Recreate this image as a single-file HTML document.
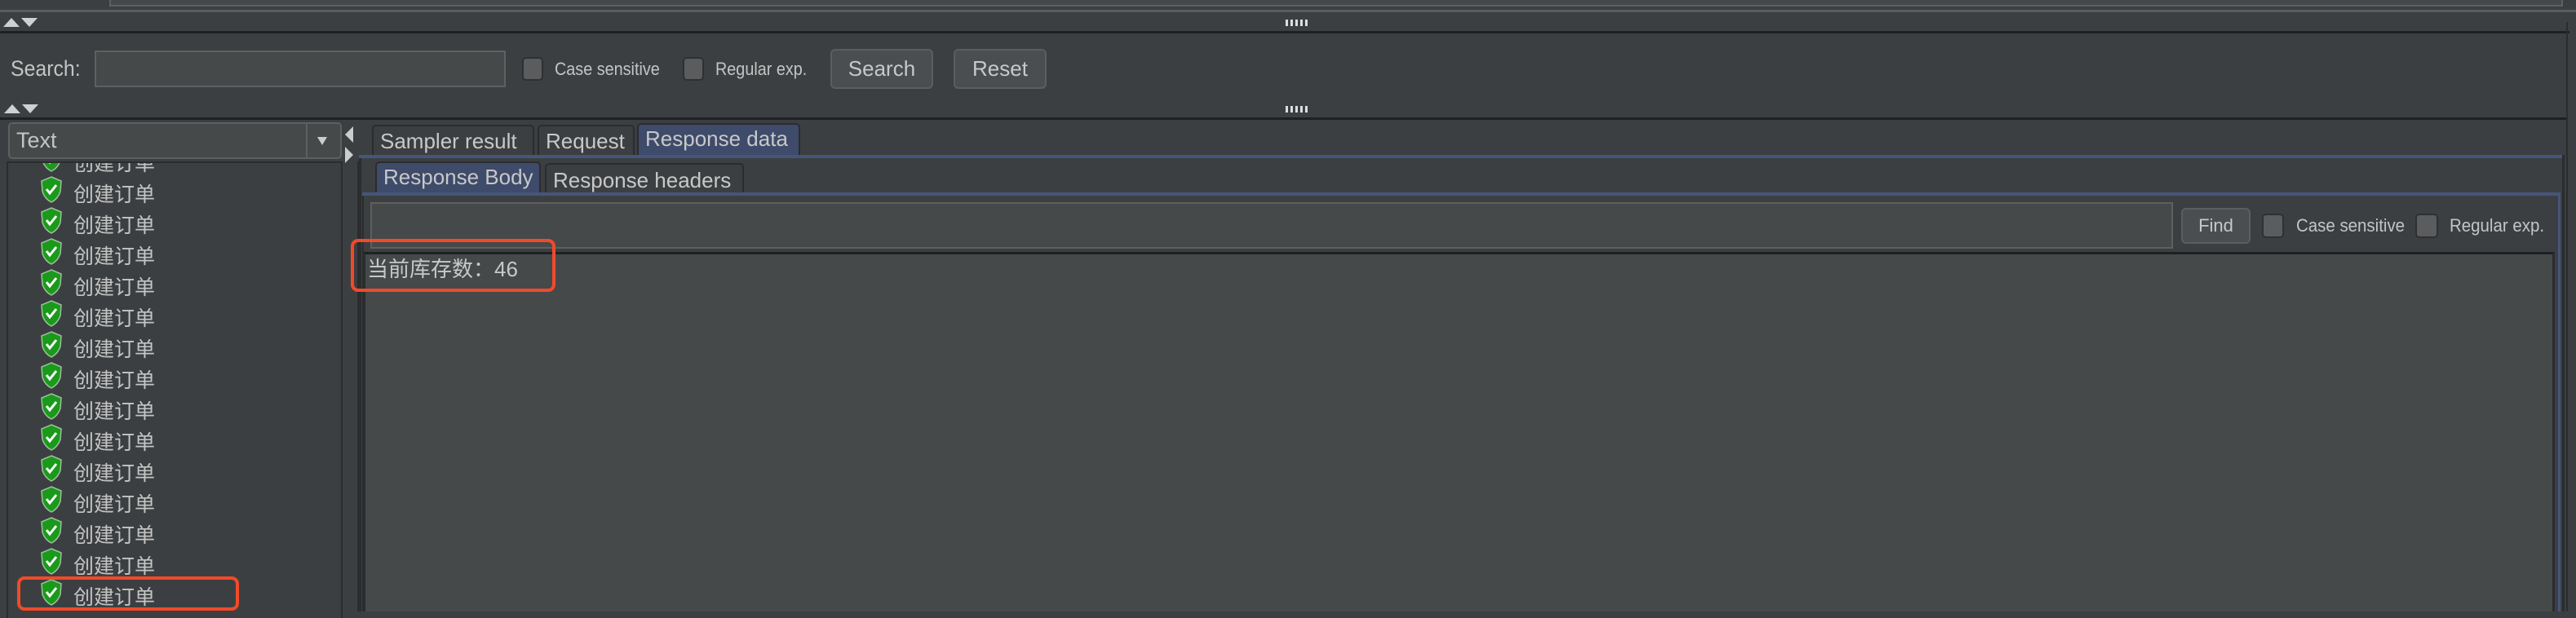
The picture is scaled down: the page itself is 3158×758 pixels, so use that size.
<!DOCTYPE html>
<html><head><meta charset="utf-8"><style>
*{margin:0;padding:0;box-sizing:border-box}
body{width:3158px;height:750px;background:#3c3f41;overflow:hidden;position:relative;font-family:"Liberation Sans","Noto Sans CJK SC",sans-serif;color:#c4c4c4}
.a{position:absolute}
.t{position:absolute;white-space:nowrap;line-height:1;transform-origin:0 0}
.cb{position:absolute;width:26px;height:29px;background:#5a5c5e;border:2px solid #2e3032;border-radius:5px}
.btn{position:absolute;background:#4a4e51;border:2px solid #5a5e61;border-radius:6px;text-align:center;color:#c8c8c8}
.tab{position:absolute;background:#3c3f41;border:2px solid #2a2c2e;border-bottom:none;border-radius:5px 5px 0 0;color:#c8c8c8;font-size:26px;padding-left:8px;white-space:nowrap}
.row{position:absolute;left:50px;height:38px}
.row span{position:absolute;left:40px;top:3px;font-size:25px;color:#c4c4c4;white-space:nowrap}
</style></head><body>
<svg width="0" height="0" style="position:absolute"><defs><g id="sh"><path d="M13 1 L25 6 L24 19 Q21 28 13 32 Q5 28 2 19 L1 6 Z" fill="#1a9a1a" stroke="#9fbf9f" stroke-width="1.5"/><path d="M7 16 L11 21 L19 11" fill="none" stroke="#fff" stroke-width="3"/></g></defs></svg>
<div class="a" style="left:134px;top:0;width:3008px;height:8px;background:#45494a;border:2px solid #5e6060;border-top:none"></div>
<div class="a" style="left:0;top:12px;width:3158px;height:3px;background:#5a5d60"></div>
<div class="a" style="left:4px;top:22px;width:0;height:0;border-left:10px solid transparent;border-right:10px solid transparent;border-bottom:11px solid #d0d0d0"></div>
<div class="a" style="left:26px;top:22px;width:0;height:0;border-left:10px solid transparent;border-right:10px solid transparent;border-top:11px solid #d0d0d0"></div>
<div class="a" style="left:1576px;top:24px;width:30px;height:8px;background:repeating-linear-gradient(90deg,#ddd 0 3px,#3c3f41 3px 6px)"></div>
<div class="a" style="left:0;top:38px;width:3150px;height:3px;background:#1e2022"></div>
<div class="a" style="left:3146px;top:27px;width:2px;height:723px;background:#2a2c2e"></div>

<div class="t" style="left:13px;top:71px;font-size:27px;transform:scaleX(.92)">Search:</div>
<div class="a" style="left:116px;top:62px;width:504px;height:45px;background:#45494a;border:2px solid #5e6060"></div>
<div class="cb" style="left:640px;top:70px"></div>
<div class="t" style="left:680px;top:74px;font-size:22px;transform:scaleX(.9)">Case sensitive</div>
<div class="cb" style="left:837px;top:70px"></div>
<div class="t" style="left:877px;top:74px;font-size:22px;transform:scaleX(.9)">Regular exp.</div>
<div class="btn" style="left:1018px;top:60px;width:126px;height:49px;font-size:26px;line-height:45px">Search</div>
<div class="btn" style="left:1169px;top:60px;width:114px;height:49px;font-size:26px;line-height:45px">Reset</div>

<div class="a" style="left:5px;top:128px;width:0;height:0;border-left:10px solid transparent;border-right:10px solid transparent;border-bottom:11px solid #d0d0d0"></div>
<div class="a" style="left:27px;top:128px;width:0;height:0;border-left:10px solid transparent;border-right:10px solid transparent;border-top:11px solid #d0d0d0"></div>
<div class="a" style="left:1576px;top:130px;width:30px;height:8px;background:repeating-linear-gradient(90deg,#ddd 0 3px,#3c3f41 3px 6px)"></div>
<div class="a" style="left:0;top:144px;width:3146px;height:3px;background:#1e2022"></div>

<div class="a" style="left:10px;top:150px;width:409px;height:45px;background:#45494a;border:2px solid #5e6060;border-radius:5px"></div>
<div class="t" style="left:20px;top:159px;font-size:27px">Text</div>
<div class="a" style="left:375px;top:152px;width:2px;height:41px;background:#5e6060"></div>
<div class="a" style="left:389px;top:168px;width:0;height:0;border-left:6px solid transparent;border-right:6px solid transparent;border-top:10px solid #ccc"></div>
<div class="a" style="left:423px;top:155px;width:0;height:0;border-top:10px solid transparent;border-bottom:10px solid transparent;border-right:10px solid #ccc"></div>
<div class="a" style="left:423px;top:180px;width:0;height:0;border-top:10px solid transparent;border-bottom:10px solid transparent;border-left:10px solid #ccc"></div>
<div class="a" style="left:8px;top:198px;width:412px;height:560px;border:2px solid #2a2c2e;border-bottom:none"></div>
<div class="a" style="left:438px;top:198px;width:3px;height:552px;background:#2a2c2e"></div>

<div class="a" style="left:0;top:200px;width:418px;height:550px;overflow:hidden">
<div class="row" style="top:-22px"><svg width="26" height="34"><use href="#sh"/></svg><span>创建订单</span></div>
<div class="row" style="top:16px"><svg width="26" height="34"><use href="#sh"/></svg><span>创建订单</span></div>
<div class="row" style="top:54px"><svg width="26" height="34"><use href="#sh"/></svg><span>创建订单</span></div>
<div class="row" style="top:92px"><svg width="26" height="34"><use href="#sh"/></svg><span>创建订单</span></div>
<div class="row" style="top:130px"><svg width="26" height="34"><use href="#sh"/></svg><span>创建订单</span></div>
<div class="row" style="top:168px"><svg width="26" height="34"><use href="#sh"/></svg><span>创建订单</span></div>
<div class="row" style="top:206px"><svg width="26" height="34"><use href="#sh"/></svg><span>创建订单</span></div>
<div class="row" style="top:244px"><svg width="26" height="34"><use href="#sh"/></svg><span>创建订单</span></div>
<div class="row" style="top:282px"><svg width="26" height="34"><use href="#sh"/></svg><span>创建订单</span></div>
<div class="row" style="top:320px"><svg width="26" height="34"><use href="#sh"/></svg><span>创建订单</span></div>
<div class="row" style="top:358px"><svg width="26" height="34"><use href="#sh"/></svg><span>创建订单</span></div>
<div class="row" style="top:396px"><svg width="26" height="34"><use href="#sh"/></svg><span>创建订单</span></div>
<div class="row" style="top:434px"><svg width="26" height="34"><use href="#sh"/></svg><span>创建订单</span></div>
<div class="row" style="top:472px"><svg width="26" height="34"><use href="#sh"/></svg><span>创建订单</span></div>
<div class="row" style="top:510px"><svg width="26" height="34"><use href="#sh"/></svg><span>创建订单</span></div>
</div>
<div class="a" style="left:21px;top:707px;width:272px;height:42px;border:4px solid #f04a2a;border-radius:9px"></div>

<div class="tab" style="left:456px;top:153px;width:199px;height:37px;line-height:37px">Sampler result</div>
<div class="tab" style="left:659px;top:153px;width:119px;height:37px;line-height:37px">Request</div>
<div class="tab" style="left:781px;top:151px;width:200px;height:40px;line-height:34px;background:#3e4b6a">Response data</div>
<div class="a" style="left:440px;top:190px;width:2703px;height:4px;background:#46557a"></div>
<div class="a" style="left:3141px;top:190px;width:3px;height:560px;background:#2a2c2e"></div>
<div class="a" style="left:440px;top:194px;width:3px;height:556px;background:#2a2c2e"></div>
<div class="tab" style="left:460px;top:198px;width:203px;height:39px;line-height:34px;background:#3e4b6a">Response Body</div>
<div class="tab" style="left:668px;top:200px;width:244px;height:37px;line-height:38px">Response headers</div>
<div class="a" style="left:444px;top:236px;width:2695px;height:4px;background:#46557a"></div>
<div class="a" style="left:3136px;top:236px;width:3px;height:514px;background:#46557a"></div>
<div class="a" style="left:444px;top:240px;width:2px;height:510px;background:#2a2c2e"></div>
<div class="a" style="left:454px;top:248px;width:2210px;height:57px;background:#45494a;border:2px solid #5e6060"></div>
<div class="btn" style="left:2674px;top:255px;width:85px;height:44px;font-size:22px;line-height:40px">Find</div>
<div class="cb" style="left:2773px;top:262px;width:27px;height:30px"></div>
<div class="t" style="left:2815px;top:266px;font-size:22px;transform:scaleX(.93)">Case sensitive</div>
<div class="cb" style="left:2961px;top:262px;width:28px;height:30px"></div>
<div class="t" style="left:3003px;top:266px;font-size:22px;transform:scaleX(.93)">Regular exp.</div>
<div class="a" style="left:445px;top:309px;width:2687px;height:441px;background:#45494a;border-top:3px solid #1e2022;border-left:3px solid #2a2c2e;border-right:3px solid #2a2c2e"></div>
<div class="t" style="left:450px;top:317px;font-size:26px;color:#c8c8c8">当前库存数：46</div>
<div class="a" style="left:430px;top:293px;width:251px;height:65px;border:4px solid #f04a2a;border-radius:9px"></div>
</body></html>
